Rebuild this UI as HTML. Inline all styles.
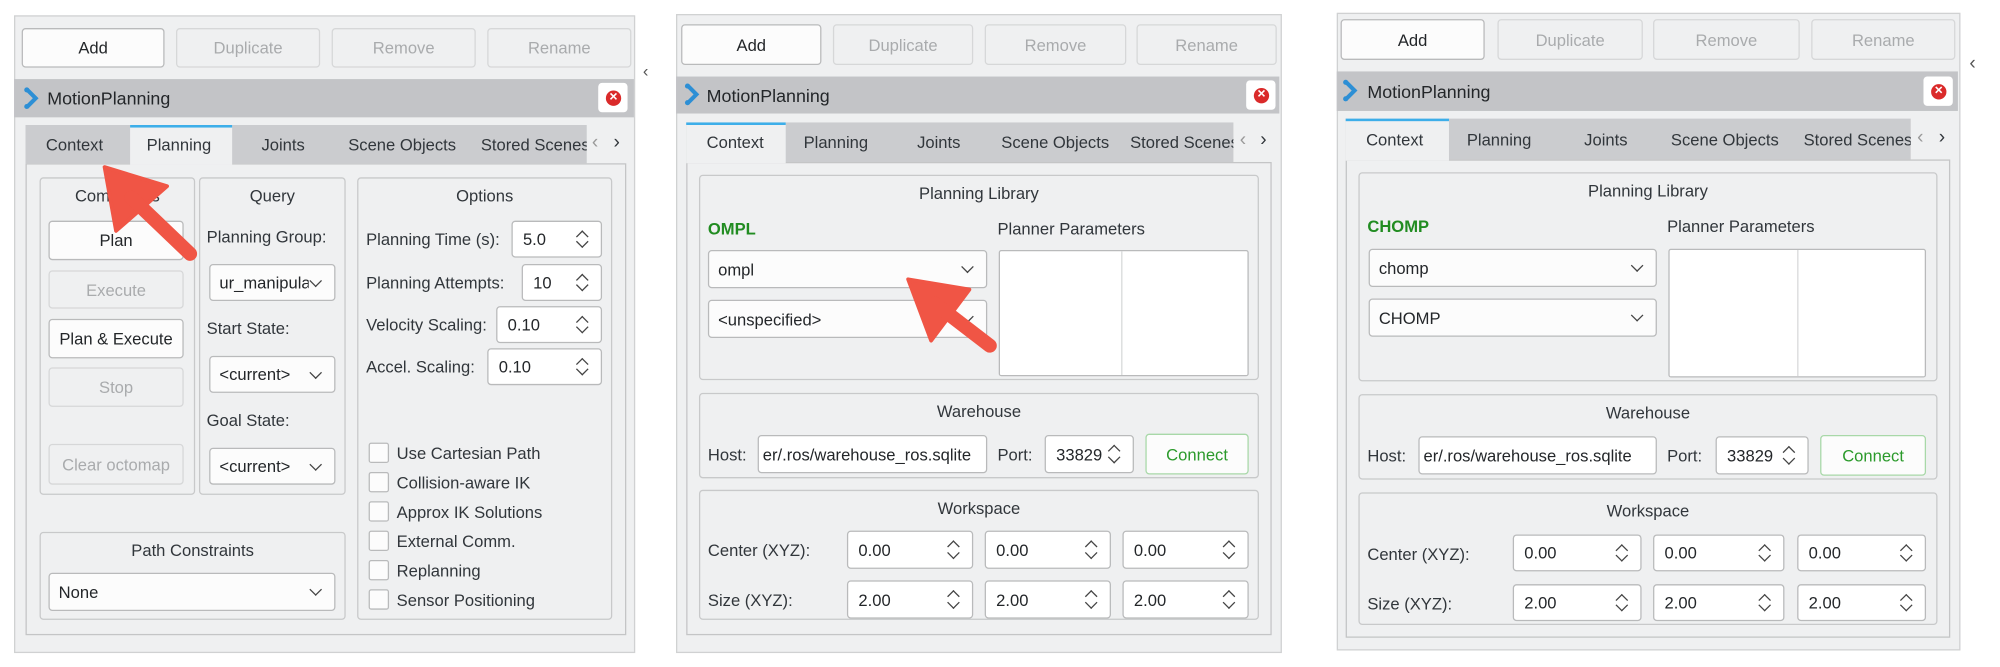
<!DOCTYPE html>
<html><head><meta charset="utf-8"><style>
html,body{margin:0;padding:0;background:#fff;width:2000px;height:667px;overflow:hidden}
#c{position:absolute;left:0;top:0;width:1568px;height:523px;transform:scale(1.27551);transform-origin:0 0;font-family:"Liberation Sans",sans-serif;font-size:13px;color:#31363b}
#c div{position:absolute;box-sizing:border-box}
.frame{background:#eff0f1;border:1px solid #d0d1d2}
.btn{background:#fcfcfc;border:1px solid #b9babb;border-radius:3px;display:flex;align-items:center;justify-content:center;color:#232629;white-space:nowrap}
.dis{background:#eff0f1;color:#a9abad;border-color:#d6d7d8}
.title{background:#c3c4c7}
.tb{background:#cbcccf}
.tabact{background:#eff0f1;border-top:2px solid #3daee9 !important}
.content{background:#eff0f1;border:1px solid #c4c5c6}
.grp{border:1px solid #c8c9ca;border-radius:3px}
.l{white-space:nowrap;line-height:16px}
.cb{background:#fcfcfc;border:1px solid #b9babb;border-radius:3px;padding-left:7px;display:flex;align-items:center;white-space:nowrap;overflow:hidden;color:#232629}
.cb::after{content:'';position:absolute;right:11px;top:50%;width:6px;height:6px;border-right:1.3px solid #444;border-bottom:1.3px solid #444;transform:translateY(-75%) rotate(45deg)}
.sp{background:#fff;border:1px solid #b9babb;border-radius:3px;padding-left:8px;display:flex;align-items:center;white-space:nowrap;color:#232629}
.sp::before{content:'';position:absolute;right:11px;top:8px;width:6px;height:6px;border-left:1.2px solid #444;border-top:1.2px solid #444;transform:rotate(45deg)}
.sp::after{content:'';position:absolute;right:11px;bottom:8px;width:6px;height:6px;border-right:1.2px solid #444;border-bottom:1.2px solid #444;transform:rotate(45deg)}
.ed{background:#fff;border:1px solid #b9babb;border-radius:3px;padding-left:3px;display:flex;align-items:center;white-space:nowrap;overflow:hidden;color:#232629}
.chk{width:16px;height:16px;background:#fcfcfc;border:1px solid #b9babb;border-radius:2px}
.white{background:#fff;border:1px solid #b9babb;border-radius:2px}
.green{color:#218c21;font-weight:bold}
.x{width:23px;height:23px;background:#fff;border-radius:3px}
.x::after{content:'×';position:absolute;left:6px;top:5.5px;width:12px;height:12px;border-radius:50%;background:#da2a2a;color:#fff;font-size:11px;line-height:11px;text-align:center;font-weight:bold}
</style></head><body><div id="c">

<!-- PANEL 1 -->
<div class="frame" style="left:11px;top:12px;width:487px;height:500px"></div>
<div class="btn" style="left:17px;top:22px;width:112px;height:31px">Add</div>
<div class="btn dis" style="left:138px;top:22px;width:113px;height:31px">Duplicate</div>
<div class="btn dis" style="left:260px;top:22px;width:113px;height:31px">Remove</div>
<div class="btn dis" style="left:382px;top:22px;width:113px;height:31px">Rename</div>
<div class="l" style="left:504px;top:48px;color:#555">‹</div>
<div class="title" style="left:11px;top:62px;width:486px;height:30px"></div>
<svg style="position:absolute;left:18px;top:68px" width="14" height="18"><path d="M3 2 L10 9 L3 16" fill="none" stroke="#2d8fd5" stroke-width="3.2"/><circle cx="3" cy="2.5" r="2" fill="#2d8fd5"/><circle cx="3" cy="15.5" r="2" fill="#2d8fd5"/></svg>
<div class="l" style="left:37px;top:69px;font-size:14px;color:#232629">MotionPlanning</div>
<div class="x" style="left:469px;top:65px"></div>
<div class="content" style="left:20px;top:128px;width:471px;height:370px"></div>
<div class="tb" style="left:20px;top:98px;width:440px;height:30px"></div>
<div class="tabact" style="left:102px;top:98px;width:80px;height:31px"></div>
<div class="l" style="left:36px;top:106px">Context</div>
<div class="l" style="left:115px;top:106px">Planning</div>
<div class="l" style="left:205px;top:106px">Joints</div>
<div class="l" style="left:273px;top:106px">Scene Objects</div>
<div class="l" style="left:377px;top:106px;width:83px;overflow:hidden">Stored Scenes</div>
<div class="l" style="left:464px;top:104px;color:#999;font-size:15px">‹</div>
<div class="l" style="left:481px;top:104px;font-size:15px">›</div>

<div class="grp" style="left:31px;top:139px;width:122px;height:249px"></div>
<div class="l" style="left:31px;top:146px;width:122px;text-align:center">Commands</div>
<div class="btn" style="left:38px;top:173px;width:106px;height:31px">Plan</div>
<div class="btn dis" style="left:38px;top:212px;width:106px;height:30px">Execute</div>
<div class="btn" style="left:38px;top:250px;width:106px;height:31px">Plan &amp; Execute</div>
<div class="btn dis" style="left:38px;top:288px;width:106px;height:31px">Stop</div>
<div class="btn dis" style="left:38px;top:348px;width:106px;height:32px">Clear octomap</div>

<div class="grp" style="left:156px;top:139px;width:115px;height:249px"></div>
<div class="l" style="left:156px;top:146px;width:115px;text-align:center">Query</div>
<div class="l" style="left:162px;top:178px">Planning Group:</div>
<div class="cb" style="left:164px;top:207px;width:99px;height:29px"><span style="width:70px;overflow:hidden">ur_manipulator</span></div>
<div class="l" style="left:162px;top:250px">Start State:</div>
<div class="cb" style="left:164px;top:279px;width:99px;height:29px">&lt;current&gt;</div>
<div class="l" style="left:162px;top:322px">Goal State:</div>
<div class="cb" style="left:164px;top:351px;width:99px;height:29px">&lt;current&gt;</div>

<div class="grp" style="left:280px;top:139px;width:200px;height:347px"></div>
<div class="l" style="left:280px;top:146px;width:200px;text-align:center">Options</div>
<div class="l" style="left:287px;top:180px">Planning Time (s):</div>
<div class="sp" style="left:401px;top:173px;width:71px;height:29px">5.0</div>
<div class="l" style="left:287px;top:214px">Planning Attempts:</div>
<div class="sp" style="left:409px;top:207px;width:63px;height:29px">10</div>
<div class="l" style="left:287px;top:247px">Velocity Scaling:</div>
<div class="sp" style="left:389px;top:240px;width:83px;height:29px">0.10</div>
<div class="l" style="left:287px;top:280px">Accel. Scaling:</div>
<div class="sp" style="left:382px;top:273px;width:90px;height:29px">0.10</div>
<div class="chk" style="left:289px;top:347px"></div><div class="l" style="left:311px;top:348px">Use Cartesian Path</div>
<div class="chk" style="left:289px;top:370px"></div><div class="l" style="left:311px;top:371px">Collision-aware IK</div>
<div class="chk" style="left:289px;top:393px"></div><div class="l" style="left:311px;top:394px">Approx IK Solutions</div>
<div class="chk" style="left:289px;top:416px"></div><div class="l" style="left:311px;top:417px">External Comm.</div>
<div class="chk" style="left:289px;top:439px"></div><div class="l" style="left:311px;top:440px">Replanning</div>
<div class="chk" style="left:289px;top:462px"></div><div class="l" style="left:311px;top:463px">Sensor Positioning</div>

<div class="grp" style="left:31px;top:417px;width:240px;height:69px"></div>
<div class="l" style="left:31px;top:424px;width:240px;text-align:center">Path Constraints</div>
<div class="cb" style="left:38px;top:449px;width:225px;height:30px">None</div>

<svg style="position:absolute;left:0;top:0" width="520" height="260"><polygon points="82,131 131,146 91,181" fill="#f05545" stroke="#f05545" stroke-width="3" stroke-linejoin="round"/><line x1="103" y1="155" x2="149" y2="199" stroke="#f05545" stroke-width="11" stroke-linecap="round"/></svg>

<!-- PANEL 2 -->
<div class="frame" style="left:530px;top:11px;width:475px;height:501px"></div>
<div class="btn" style="left:534px;top:19px;width:110px;height:32px">Add</div>
<div class="btn dis" style="left:653px;top:19px;width:110px;height:32px">Duplicate</div>
<div class="btn dis" style="left:772px;top:19px;width:111px;height:32px">Remove</div>
<div class="btn dis" style="left:891px;top:19px;width:110px;height:32px">Rename</div>
<div class="title" style="left:530px;top:60px;width:473px;height:29px"></div>
<svg style="position:absolute;left:536px;top:65px" width="14" height="18"><path d="M3 2 L10 9 L3 16" fill="none" stroke="#2d8fd5" stroke-width="3.2"/><circle cx="3" cy="2.5" r="2" fill="#2d8fd5"/><circle cx="3" cy="15.5" r="2" fill="#2d8fd5"/></svg>
<div class="l" style="left:554px;top:67px;font-size:14px;color:#232629">MotionPlanning</div>
<div class="x" style="left:977px;top:63px"></div>
<div class="content" style="left:538px;top:127px;width:459px;height:371px"></div>
<div class="tb" style="left:538px;top:96px;width:429px;height:31px"></div>
<div class="tabact" style="left:538px;top:96px;width:78px;height:32px"></div>
<div class="l" style="left:554px;top:104px">Context</div>
<div class="l" style="left:630px;top:104px">Planning</div>
<div class="l" style="left:719px;top:104px">Joints</div>
<div class="l" style="left:785px;top:104px">Scene Objects</div>
<div class="l" style="left:886px;top:104px;width:81px;overflow:hidden">Stored Scenes</div>
<div class="l" style="left:972px;top:102px;color:#999;font-size:15px">‹</div>
<div class="l" style="left:988px;top:102px;font-size:15px">›</div>

<div class="grp" style="left:548px;top:137px;width:439px;height:161px"></div>
<div class="l" style="left:548px;top:144px;width:439px;text-align:center">Planning Library</div>
<div class="l green" style="left:555px;top:172px">OMPL</div>
<div class="l" style="left:782px;top:172px">Planner Parameters</div>
<div class="cb" style="left:555px;top:196px;width:219px;height:30px">ompl</div>
<div class="cb" style="left:555px;top:235px;width:219px;height:30px">&lt;unspecified&gt;</div>
<div class="white" style="left:783px;top:196px;width:196px;height:99px"></div>
<div style="left:879px;top:197px;width:1px;height:97px;background:#d8d9da"></div>

<div class="grp" style="left:548px;top:308px;width:439px;height:67px"></div>
<div class="l" style="left:548px;top:315px;width:439px;text-align:center">Warehouse</div>
<div class="l" style="left:555px;top:349px">Host:</div>
<div class="ed" style="left:594px;top:341px;width:180px;height:30px">er/.ros/warehouse_ros.sqlite</div>
<div class="l" style="left:782px;top:349px">Port:</div>
<div class="sp" style="left:819px;top:341px;width:70px;height:30px">33829</div>
<div class="btn" style="left:898px;top:340px;width:81px;height:32px;color:#2b9a2b;border-color:#a8d8a8">Connect</div>

<div class="grp" style="left:548px;top:384px;width:439px;height:102px"></div>
<div class="l" style="left:548px;top:391px;width:439px;text-align:center">Workspace</div>
<div class="l" style="left:555px;top:424px">Center (XYZ):</div>
<div class="l" style="left:555px;top:463px">Size (XYZ):</div>
<div class="sp" style="left:664px;top:416px;width:99px;height:30px">0.00</div>
<div class="sp" style="left:772px;top:416px;width:99px;height:30px">0.00</div>
<div class="sp" style="left:880px;top:416px;width:99px;height:30px">0.00</div>
<div class="sp" style="left:664px;top:455px;width:99px;height:30px">2.00</div>
<div class="sp" style="left:772px;top:455px;width:99px;height:30px">2.00</div>
<div class="sp" style="left:880px;top:455px;width:99px;height:30px">2.00</div>

<svg style="position:absolute;left:0;top:0" width="1000" height="300"><polygon points="712,219 760,227 730,267" fill="#f05545" stroke="#f05545" stroke-width="3" stroke-linejoin="round"/><line x1="733" y1="238" x2="776" y2="271" stroke="#f05545" stroke-width="11" stroke-linecap="round"/></svg>

<!-- PANEL 3 -->
<div class="frame" style="left:1048px;top:10px;width:489px;height:500px"></div>
<div class="btn" style="left:1051px;top:15px;width:113px;height:32px">Add</div>
<div class="btn dis" style="left:1174px;top:15px;width:114px;height:32px">Duplicate</div>
<div class="btn dis" style="left:1296px;top:15px;width:115px;height:32px">Remove</div>
<div class="btn dis" style="left:1420px;top:15px;width:113px;height:32px">Rename</div>
<div class="l" style="left:1544px;top:42px;color:#555;font-size:15px">‹</div>
<div class="title" style="left:1048px;top:56px;width:487px;height:31px"></div>
<svg style="position:absolute;left:1052px;top:62px" width="14" height="18"><path d="M3 2 L10 9 L3 16" fill="none" stroke="#2d8fd5" stroke-width="3.2"/><circle cx="3" cy="2.5" r="2" fill="#2d8fd5"/><circle cx="3" cy="15.5" r="2" fill="#2d8fd5"/></svg>
<div class="l" style="left:1072px;top:64px;font-size:14px;color:#232629">MotionPlanning</div>
<div class="x" style="left:1508px;top:60px"></div>
<div class="content" style="left:1055px;top:125px;width:474px;height:375px"></div>
<div class="tb" style="left:1055px;top:93px;width:443px;height:32px"></div>
<div class="tabact" style="left:1055px;top:93px;width:81px;height:33px"></div>
<div class="l" style="left:1071px;top:102px">Context</div>
<div class="l" style="left:1150px;top:102px">Planning</div>
<div class="l" style="left:1242px;top:102px">Joints</div>
<div class="l" style="left:1310px;top:102px">Scene Objects</div>
<div class="l" style="left:1414px;top:102px;width:84px;overflow:hidden">Stored Scenes</div>
<div class="l" style="left:1503px;top:100px;color:#999;font-size:15px">‹</div>
<div class="l" style="left:1520px;top:100px;font-size:15px">›</div>

<div class="grp" style="left:1065px;top:135px;width:454px;height:164px"></div>
<div class="l" style="left:1065px;top:142px;width:454px;text-align:center">Planning Library</div>
<div class="l green" style="left:1072px;top:170px">CHOMP</div>
<div class="l" style="left:1307px;top:170px">Planner Parameters</div>
<div class="cb" style="left:1073px;top:195px;width:226px;height:30px">chomp</div>
<div class="cb" style="left:1073px;top:234px;width:226px;height:30px">CHOMP</div>
<div class="white" style="left:1308px;top:195px;width:202px;height:101px"></div>
<div style="left:1409px;top:196px;width:1px;height:99px;background:#d8d9da"></div>

<div class="grp" style="left:1065px;top:309px;width:454px;height:67px"></div>
<div class="l" style="left:1065px;top:316px;width:454px;text-align:center">Warehouse</div>
<div class="l" style="left:1072px;top:350px">Host:</div>
<div class="ed" style="left:1112px;top:342px;width:187px;height:30px">er/.ros/warehouse_ros.sqlite</div>
<div class="l" style="left:1307px;top:350px">Port:</div>
<div class="sp" style="left:1345px;top:342px;width:73px;height:30px">33829</div>
<div class="btn" style="left:1427px;top:341px;width:83px;height:32px;color:#2b9a2b;border-color:#a8d8a8">Connect</div>

<div class="grp" style="left:1065px;top:386px;width:454px;height:104px"></div>
<div class="l" style="left:1065px;top:393px;width:454px;text-align:center">Workspace</div>
<div class="l" style="left:1072px;top:427px">Center (XYZ):</div>
<div class="l" style="left:1072px;top:466px">Size (XYZ):</div>
<div class="sp" style="left:1186px;top:419px;width:101px;height:29px">0.00</div>
<div class="sp" style="left:1296px;top:419px;width:103px;height:29px">0.00</div>
<div class="sp" style="left:1409px;top:419px;width:101px;height:29px">0.00</div>
<div class="sp" style="left:1186px;top:458px;width:101px;height:29px">2.00</div>
<div class="sp" style="left:1296px;top:458px;width:103px;height:29px">2.00</div>
<div class="sp" style="left:1409px;top:458px;width:101px;height:29px">2.00</div>

</div></body></html>
